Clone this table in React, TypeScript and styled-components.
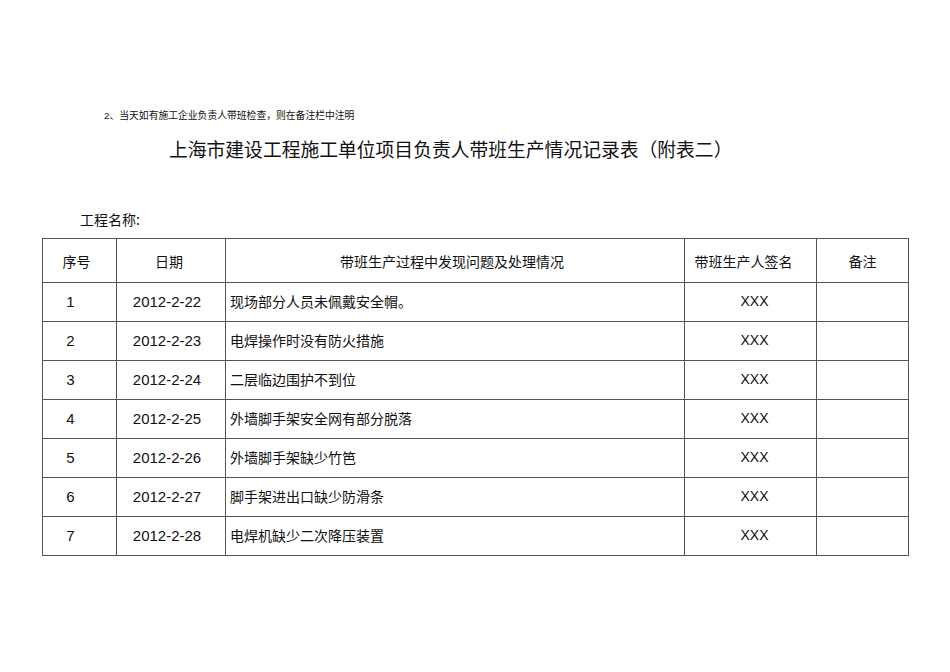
import React from "react";
import styled, { createGlobalStyle } from "styled-components";

const GlobalStyle = createGlobalStyle`
  html, body {
    margin: 0;
    padding: 0;
    background: #ffffff;
  }
  body {
    font-family: "Liberation Sans", "Noto Sans CJK SC", sans-serif;
    color: #111;
  }
`;

const Page = styled.div`
  width: 950px;
  height: 672px;
  padding: 109px 0 0 42px;
  box-sizing: border-box;
`;

const Note = styled.div`
  margin-left: 62px;
  font-size: 9.8px;
  line-height: 14px;
  font-family: "Liberation Sans", "Noto Sans CJK SC", sans-serif;
`;

const Title = styled.h1`
  margin: 13px 0 0 127px;
  font-size: 18.8px;
  line-height: 26px;
  font-weight: normal;
  font-family: "Noto Sans CJK SC", sans-serif;
`;

const ProjectName = styled.div`
  margin: 47px 0 0 38px;
  font-size: 14px;
  line-height: 20px;
  font-family: "Noto Sans CJK SC", sans-serif;
`;

const Table = styled.table`
  margin-top: 9px;
  border-collapse: collapse;
  table-layout: fixed;
  width: 866px;
`;

const Th = styled.th<{ $shift?: number }>`
  height: 43px;
  padding: 0 ${(p) => ((p.$shift ?? 0) < 0 ? -2 * (p.$shift ?? 0) : 0)}px 0
    ${(p) => ((p.$shift ?? 0) > 0 ? 2 * (p.$shift ?? 0) : 0)}px;
  border: 1px solid #555;
  font-weight: normal;
  font-size: 14px;
  font-family: "Noto Sans CJK SC", sans-serif;
  text-align: center;
  vertical-align: middle;
`;

const Td = styled.td<{ $align?: "left" | "center"; $cjk?: boolean; $shift?: number; $size?: number }>`
  height: 36px;
  padding: 0 ${(p) => ((p.$shift ?? 0) < 0 ? -2 * (p.$shift ?? 0) : 0)}px 2px
    ${(p) => (p.$align === "left" ? 4 : (p.$shift ?? 0) > 0 ? 2 * (p.$shift ?? 0) : 0)}px;
  border: 1px solid #555;
  font-size: ${(p) => p.$size ?? 14}px;
  font-family: ${(p) =>
    p.$cjk ? `"Noto Sans CJK SC", sans-serif` : `"Liberation Sans", "Noto Sans CJK SC", sans-serif`};
  text-align: ${(p) => p.$align ?? "center"};
  vertical-align: middle;
  white-space: nowrap;
`;

const rows = [
  { no: 1, date: "2012-2-22", issue: "现场部分人员未佩戴安全帽。" },
  { no: 2, date: "2012-2-23", issue: "电焊操作时没有防火措施" },
  { no: 3, date: "2012-2-24", issue: "二层临边围护不到位" },
  { no: 4, date: "2012-2-25", issue: "外墙脚手架安全网有部分脱落" },
  { no: 5, date: "2012-2-26", issue: "外墙脚手架缺少竹笆" },
  { no: 6, date: "2012-2-27", issue: "脚手架进出口缺少防滑条" },
  { no: 7, date: "2012-2-28", issue: "电焊机缺少二次降压装置" },
];

export default function App() {
  return (
    <>
      <GlobalStyle />
      <Page>
        <Note>2、当天如有施工企业负责人带班检查，则在备注栏中注明</Note>
        <Title>上海市建设工程施工单位项目负责人带班生产情况记录表（附表二）</Title>
        <ProjectName>工程名称:</ProjectName>
        <Table>
          <colgroup>
            <col style={{ width: 74 }} />
            <col style={{ width: 109 }} />
            <col style={{ width: 459 }} />
            <col style={{ width: 132 }} />
            <col style={{ width: 92 }} />
          </colgroup>
          <thead>
            <tr>
              <Th $shift={-3}>序号</Th>
              <Th $shift={-2}>日期</Th>
              <Th $shift={-3}>带班生产过程中发现问题及处理情况</Th>
              <Th $shift={-7}>带班生产人签名</Th>
              <Th>备注</Th>
            </tr>
          </thead>
          <tbody>
            {rows.map((r) => (
              <tr key={r.no}>
                <Td $shift={-9} $size={15}>
                  {r.no}
                </Td>
                <Td $shift={-4} $size={15}>
                  {r.date}
                </Td>
                <Td $align="left" $cjk>
                  {r.issue}
                </Td>
                <Td $shift={4}>XXX</Td>
                <Td />
              </tr>
            ))}
          </tbody>
        </Table>
      </Page>
    </>
  );
}
